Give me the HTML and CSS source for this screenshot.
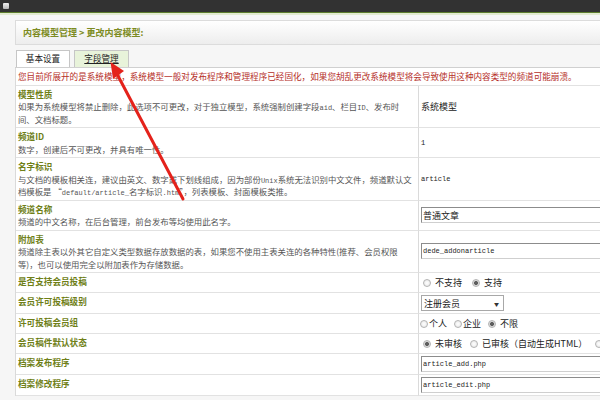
FILE: index.html
```html
<!DOCTYPE html>
<html lang="zh-CN">
<head>
<meta charset="utf-8">
<title>更改内容模型</title>
<link rel="stylesheet" href="styles.css">
</head>
<body>
<div class="topbar"><span class="win-icon"></span></div>
<div class="topline"></div>
<main class="page">
  <div class="crumb">内容模型管理 &gt; 更改内容模型:</div>
  <div class="tabs">
    <span class="tab">基本设置</span>
    <span class="tab tab-active">字段管理</span>
  </div>
  <div class="form">
    <div class="warn">您目前所展开的是系统模型，系统模型一般对发布程序和管理程序已经固化，如果您胡乱更改系统模型将会导致使用这种内容类型的频道可能崩溃。</div>

    <div class="cell-l"><div class="ttl">模型性质</div><div class="desc desc-narrow">如果为系统模型将禁止删除，此选项不可更改，对于独立模型，系统强制创建字段<span class="code">aid</span>、栏目<span class="code">ID</span>、发布时间、文档标题。</div></div>
    <div class="cell-r">系统模型</div>

    <div class="cell-l"><div class="ttl">频道ID</div><div class="desc">数字，创建后不可更改，并具有唯一性。</div></div>
    <div class="cell-r"><span class="mono">1</span></div>

    <div class="cell-l"><div class="ttl">名字标识</div><div class="desc">与文档的模板相关连，建议由英文、数字或下划线组成，因为部份<span class="code">Unix</span>系统无法识别中文文件，频道默认文档模板是 “<span class="code">default/article_</span>名字标识<span class="code">.htm</span>”，列表模板、封面模板类推。</div></div>
    <div class="cell-r"><span class="mono">article</span></div>

    <div class="cell-l"><div class="ttl">频道名称</div><div class="desc">频道的中文名称，在后台管理，前台发布等均使用此名字。</div></div>
    <div class="cell-r"><input class="inp" type="text" value="普通文章"></div>

    <div class="cell-l"><div class="ttl">附加表</div><div class="desc">频道除主表以外其它自定义类型数据存放数据的表，如果您不使用主表关连的各种特性(推荐、会员权限等)，也可以使用完全以附加表作为存储数据。</div></div>
    <div class="cell-r"><input class="inp mono-inp" type="text" value="dede_addonarticle"></div>

    <div class="cell-l"><div class="ttl">是否支持会员投稿</div></div>
    <div class="cell-r opts opts-wide">
      <label class="opt"><input class="rd" type="radio" name="sendmember">不支持</label>
      <label class="opt"><input class="rd" type="radio" name="sendmember" checked>支持</label>
    </div>

    <div class="cell-l"><div class="ttl">会员许可投稿级别</div></div>
    <div class="cell-r"><span class="select"><span>注册会员</span><span class="caret">▼</span></span></div>

    <div class="cell-l"><div class="ttl">许可投稿会员组</div></div>
    <div class="cell-r opts opts-tight">
      <label class="opt"><input class="rd" type="radio" name="usertype">个人</label>
      <label class="opt"><input class="rd" type="radio" name="usertype">企业</label>
      <label class="opt opt-spaced"><input class="rd" type="radio" name="usertype" checked>不限</label>
    </div>

    <div class="cell-l"><div class="ttl">会员稿件默认状态</div></div>
    <div class="cell-r opts opts-wide opts-status">
      <label class="opt"><input class="rd" type="radio" name="arcrank" checked>未审核</label>
      <label class="opt"><input class="rd" type="radio" name="arcrank">已审核（自动生成HTML）</label>
      <label class="opt"><input class="rd" type="radio" name="arcrank" aria-label="已审核"></label>
    </div>

    <div class="cell-l"><div class="ttl">档案发布程序</div></div>
    <div class="cell-r"><input class="inp mono-inp" type="text" value="article_add.php"></div>

    <div class="cell-l"><div class="ttl">档案修改程序</div></div>
    <div class="cell-r"><input class="inp mono-inp" type="text" value="article_edit.php"></div>
  </div>
</main>
<svg class="arrow" width="600" height="400" viewBox="0 0 600 400" aria-hidden="true">
  <line x1="117" y1="74" x2="183" y2="199" stroke="#e4221b" stroke-width="3" stroke-linecap="round"/>
  <polygon points="110.5,62 124,71 113,79" fill="#e4221b"/>
</svg>
</body>
</html>
```
FILE: styles.css
```css
html, body {
  margin: 0;
  width: 600px;
  height: 400px;
  overflow: hidden;
}
body {
  background: #f6f6f6;
  font-family: "Noto Sans CJK SC", "Noto Sans", sans-serif;
  color: #333;
  position: relative;
}
.topbar {
  height: 12px;
  background: #323232;
  box-sizing: border-box;
  padding: 3px 0 0 3px;
  display: flex;
  align-items: flex-start;
}
.win-icon {
  width: 6px;
  height: 6px;
  background: linear-gradient(#f0f0f0, #b8b8b8);
  border-radius: 1px;
}
.topline {
  height: 1px;
  background: #5d7d2e;
  border-bottom: 2px solid #e2ebd0;
}
.page {
  padding: 5px 0 0 15px;
}
.crumb {
  height: 23px;
  border: 1px solid #dcdcdc;
  border-right: 0;
  background: linear-gradient(#ffffff, #ededed);
  display: flex;
  align-items: center;
  padding-left: 7px;
  font-size: 9px;
  font-weight: bold;
  color: #7c8b22;
}
.tabs {
  margin-top: 5px;
  height: 17px;
  padding-left: 1px;
  display: flex;
  gap: 4px;
  border-bottom: 1px solid #d0d0d0;
}
.tab {
  box-sizing: border-box;
  height: 17px;
  width: 54px;
  border: 1px solid #c6c6c6;
  border-bottom: 0;
  background: #fff;
  font-size: 8.6px;
  line-height: 15px;
  text-align: center;
  color: #222;
}
.tab-active {
  width: 55px;
  background: #e8f3da;
  text-decoration: underline;
}
.form {
  width: 640px;
  display: grid;
  grid-template-columns: 403px 1fr;
  background: #fff;
  border-left: 1px solid #dadada;
}
.warn {
  grid-column: 1 / -1;
  padding: 2px 2px;
  font-size: 8.6px;
  line-height: 12.5px;
  color: #b52e28;
  border-bottom: 1px solid #e2e2e2;
}
.cell-l {
  padding: 2px 2px;
  border-right: 1px solid #dadada;
  border-bottom: 1px solid #e2e2e2;
  line-height: 12.5px;
}
.cell-r {
  padding: 2px 0 2px 2px;
  min-height: 15px;
  border-bottom: 1px solid #e2e2e2;
  display: flex;
  align-items: center;
  font-size: 9px;
  color: #222;
}
.ttl {
  font-size: 8.6px;
  font-weight: bold;
  color: #6f7f17;
}
.desc {
  font-size: 8.4px;
  color: #555;
}
.desc-narrow {
  max-width: 390px;
}
.code {
  font-family: "Liberation Mono", monospace;
  font-size: 7px;
  line-height: 1;
}
.mono {
  font-family: "Liberation Mono", monospace;
  font-size: 7px;
}
.inp {
  box-sizing: border-box;
  width: 190px;
  height: 16px;
  margin: 0;
  border: 1px solid;
  border-color: #8c8c8c #cfcfcf #cfcfcf #8c8c8c;
  padding: 0 1px;
  font-family: "Noto Sans CJK SC", sans-serif;
  font-size: 9px;
  color: #222;
  background: #fff;
}
.mono-inp {
  font-family: "Liberation Mono", monospace;
  font-size: 7px;
}
.opts {
  display: flex;
  align-items: center;
}
.opts-wide {
  gap: 10px;
  padding-left: 4px;
}
.opts-wide .rd {
  margin-right: 4px;
}
.opts-status {
  gap: 8px;
}
.opts-tight {
  gap: 7px;
  padding-left: 1px;
}
.opts-tight .rd {
  margin-right: 1px;
}
.opts-tight .opt-spaced .rd {
  margin-right: 4px;
}
.opt {
  display: flex;
  align-items: center;
  white-space: nowrap;
}
.rd {
  appearance: none;
  -webkit-appearance: none;
  box-sizing: border-box;
  width: 8px;
  height: 8px;
  margin: 0;
  border: 1px solid #b3b3b3;
  border-radius: 50%;
  background: radial-gradient(circle, #ffffff 0%, #e4e4e4 100%);
}
.rd:checked {
  background: radial-gradient(circle, #5e5e5e 0 1.6px, #d6d6d6 2.3px, #f2f2f2 100%);
}
.select {
  box-sizing: border-box;
  width: 83px;
  height: 16px;
  border: 1px solid #a8a8a8;
  display: flex;
  align-items: center;
  justify-content: space-between;
  padding: 0 4px 0 2px;
  font-size: 9px;
  background: #fff;
}
.caret {
  font-size: 5px;
  color: #333;
}
.arrow {
  position: absolute;
  left: 0;
  top: 0;
  pointer-events: none;
}
```
